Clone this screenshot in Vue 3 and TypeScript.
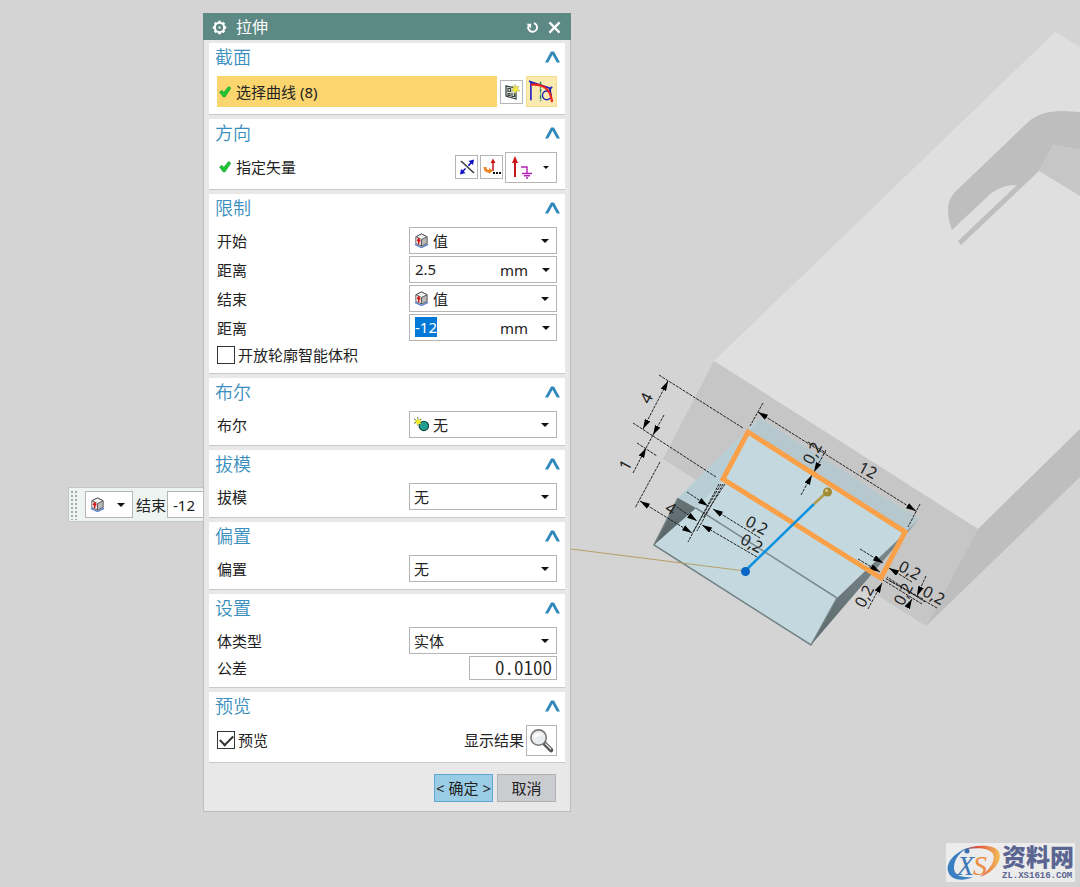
<script setup lang="ts">
import { onMounted, ref } from 'vue'

interface Line {
  d: string
  kind?: 'end' | 'both'
}
interface Label {
  x: number
  y: number
  r: number
  t: string
}

const start = ref('值')
const end = ref('值')
const startDistance = ref('2.5')
const endDistance = ref('-12')
const openProfile = ref(false)
const preview = ref(true)
const tolerance = ref('0.0100')
const endField = ref<HTMLInputElement | null>(null)

const simple = [
  { id: 'boolean', title: '布尔', icon: true },
  { id: 'draft', title: '拔模', icon: false },
  { id: 'offset', title: '偏置', icon: false },
]

const lines: Line[] = [
  { d: 'M659 375L743 428' },
  { d: 'M633 423L716 477' },
  { d: 'M668 381L643 429', kind: 'both' },
  { d: 'M664 415L653 435', kind: 'end' },
  { d: 'M653 435L646 448' },
  { d: 'M633 473L646 448', kind: 'end' },
  { d: 'M637 443L657 456' },
  { d: 'M660 462L635 508' },
  { d: 'M640 501L692 533', kind: 'both' },
  { d: 'M719 484L688 542' },
  { d: 'M721 484L693 532' },
  { d: 'M723 484L697 531' },
  { d: 'M725 484L703 518' },
  { d: 'M687 492L708 506', kind: 'end' },
  { d: 'M760 538L713 509', kind: 'end' },
  { d: 'M677 507L697 521', kind: 'end' },
  { d: 'M757 557L702 525', kind: 'end' },
  { d: 'M763 403L750 426' },
  { d: 'M758 412L916 511', kind: 'both' },
  { d: 'M920 504L908 527' },
  { d: 'M826 450L814 472', kind: 'end' },
  { d: 'M801 495L812 475', kind: 'end' },
  { d: 'M808 442L826 453' },
  { d: 'M860 549L883 563', kind: 'end' },
  { d: 'M858 559L880 572', kind: 'end' },
  { d: 'M912 582L889 568', kind: 'end' },
  { d: 'M937 608L885 578' },
  { d: 'M922 604L883 580' },
  { d: 'M925 602L887 577' },
  { d: 'M923 599L888 580' },
  { d: 'M868 609L882 583', kind: 'end' },
  { d: 'M926 576L917 596', kind: 'end' },
  { d: 'M907 608L912 599', kind: 'end' },
]

const labels: Label[] = [
  { x: 646, y: 398, r: -62, t: '4' },
  { x: 625, y: 465, r: -62, t: '1' },
  { x: 671, y: 508, r: 32, t: '4' },
  { x: 757, y: 525, r: 28, t: '0,2' },
  { x: 752, y: 543, r: 28, t: '0,2' },
  { x: 812, y: 453, r: -62, t: '0,2' },
  { x: 868, y: 470, r: 28, t: '12' },
  { x: 910, y: 570, r: 28, t: '0,2' },
  { x: 934, y: 595, r: 28, t: '0,2' },
  { x: 864, y: 596, r: -62, t: '0,2' },
  { x: 903, y: 594, r: -62, t: '0,2' },
]

onMounted(() => {
  endField.value?.focus()
  endField.value?.select()
})
</script>

<template>
  <main class="desktop">
    <svg class="scene" viewBox="0 0 1080 887" preserveAspectRatio="xMinYMin slice" aria-hidden="true">
      <defs>
        <marker id="arrow" viewBox="0 0 10 6" refX="10" refY="3" markerWidth="10" markerHeight="6" markerUnits="userSpaceOnUse" orient="auto-start-reverse">
          <path d="M0 0L10 3L0 6Z" fill="#000" />
        </marker>
        <linearGradient id="left-side" x1="0" y1="0" x2="0" y2="1">
          <stop offset="0" stop-color="#667477" />
          <stop offset="1" stop-color="#58656a" />
        </linearGradient>
        <linearGradient id="right-side" x1="1" y1="0" x2="0" y2="1">
          <stop offset="0" stop-color="#839296" />
          <stop offset="1" stop-color="#5d696c" />
        </linearGradient>
      </defs>
      <path d="M1055 32L1080 47V429L978 529L714 361Z" fill="#dfdfdf" />
      <path d="M714 361L978 529L926 626L663 459Z" fill="#c6c6c6" />
      <path d="M978 529L1080 429V477L926 626Z" fill="#bebebe" />
      <path d="M948 211C948 203 950 197 956 191L1026 124C1036 114 1048 111 1062 111L1080 112V150L1053 145L1039 171L961 245L958 241L1017 185C1004 185 995 189 986 198L952 230C950 224 948 218 948 211Z" fill="#bebebe" />
      <path d="M1053 145L1080 150V196L1039 171Z" fill="#c6c6c6" />

      <path d="M760 418L919 519L837 598L811 645L654 545L678 498Z" fill="#c4d9df" />
      <path d="M760 418L919 519L906 533L748 432Z" fill="#b6c8cd" />
      <path d="M760 418L748 432L723 480L696 508L678 498Z" fill="#b8ced6" />
      <path d="M678 498L696 508L654 545Z" fill="url(#left-side)" />
      <path d="M919 519L811 645L837 598L905 533Z" fill="url(#right-side)" />
      <path d="M696 508L837 598" stroke="#7b898c" stroke-width="1.5" />
      <path d="M678 498L654 545L811 645L837 598" fill="none" stroke="#718084" stroke-width="1.5" />

      <path d="M571 549L745 571" stroke="#b69f66" />
      <path v-for="line in lines" :key="line.d" class="dim" :d="line.d"
        :marker-end="line.kind ? 'url(#arrow)' : undefined"
        :marker-start="line.kind === 'both' ? 'url(#arrow)' : undefined" />
      <path d="M748 432L905 532L881 578L723 479Z" fill="none" stroke="#f9a048" stroke-width="5" />
      <path d="M745 571L814 504" stroke="#0c91e0" stroke-width="2.5" />
      <path d="M814 504L827 492" stroke="#b09a4c" stroke-width="2.5" />
      <circle cx="827.5" cy="492" r="4.5" fill="#a18a35" />
      <circle cx="826.5" cy="490.500" r="1.500" fill="#ddcb85" />
      <circle cx="745.5" cy="571.500" r="4.500" fill="#0a66c6" />
      <text v-for="(l, i) in labels" :key="i" class="dim-text" :transform="`translate(${l.x} ${l.y}) rotate(${l.r})`" y="6">{{ l.t }}</text>

      <symbol id="cube" viewBox="0 0 16 16">
        <path d="M1 12L8 15.500L15 12" fill="none" stroke="#5c86d4" stroke-width="1.500" />
        <path d="M2 4L8 1L14 4V11L8 14L2 11Z" fill="#b9b9b9" stroke="#555" />
        <path d="M2 4L8 1L14 4L8 7Z" fill="#f1f1f1" stroke="#555" />
        <path d="M2.500 4.800L7.500 7V13L2.500 10.800Z" fill="#f0dcdc" />
        <path d="M8 7V14" stroke="#555" />
        <path d="M5 12V7M3.500 8.500L5 6L6.500 9" fill="none" stroke="#d01414" stroke-width="1.400" />
      </symbol>
      <symbol id="check" viewBox="0 0 12 12">
        <path d="M0.500 6L3 4.300L4.800 6.300L9.500 0.500L12 2L6 11H4.200Z" fill="#1fc335" stroke="#109a28" stroke-width="0.500" />
      </symbol>
      <symbol id="chevron" viewBox="0 0 15 12">
        <path d="M0 11.500L6 0.500H9L15 11.500H11.800L7.500 3.800L3.200 11.500Z" fill="#3089b9" />
      </symbol>
    </svg>

    <form class="floating" @submit.prevent>
      <span class="grip"></span>
      <span class="pick mini">
        <svg class="pick-icon"><use href="#cube" /></svg>
        <select aria-label="结束类型"><option></option></select>
      </span>
      <label for="quick-end">结束</label>
      <input id="quick-end" v-model="endDistance" type="text" />
    </form>

    <section class="dialog" role="dialog" aria-labelledby="dialog-title">
      <header class="titlebar">
        <svg class="gear" viewBox="0 0 16 16">
          <circle cx="8" cy="8" r="5" fill="none" stroke="#fff" stroke-width="2.200" />
          <path d="M8 0.800V3M8 13V15.200M0.800 8H3M13 8H15.200M2.900 2.900L4.500 4.500M11.500 11.500L13.100 13.100M2.900 13.100L4.500 11.500M11.500 4.500L13.100 2.900" stroke="#fff" stroke-width="2.800" />
          <circle cx="8" cy="8" r="1.200" fill="#fff" />
        </svg>
        <h1 id="dialog-title">拉伸</h1>
        <button type="button" class="tool" aria-label="重置">
          <svg viewBox="0 0 14 14"><path d="M8.500 2.200A4.800 4.800 0 1 1 2.600 5.200" fill="none" stroke="#fff" stroke-width="2" /><path d="M0.500 3H5.500V8Z" fill="#fff" /></svg>
        </button>
        <button type="button" class="tool" aria-label="关闭">
          <svg viewBox="0 0 14 14"><path d="M1.500 1.500L12.500 12.500M12.500 1.500L1.500 12.500" stroke="#fff" stroke-width="2.400" /></svg>
        </button>
      </header>

      <form class="body" @submit.prevent>
        <section class="group">
          <h2>截面 <button type="button" aria-label="收起截面"><svg><use href="#chevron" /></svg></button></h2>
          <div class="row picker">
            <span class="selected"><svg class="check"><use href="#check" /></svg>选择曲线 (8)</span>
            <button type="button" class="icon-btn" aria-label="绘制截面">
              <svg viewBox="0 0 18 18">
                <path d="M3 3L13 5V16L3 13Z" fill="#e9eee6" stroke="#3b4540" stroke-width="1.300" />
                <path d="M5 5.500H7.500V8.500H5ZM5 10.500H7V12.500H5ZM9 9.500V13.500H11.500V10" fill="none" stroke="#3b4540" stroke-width="1.200" />
                <path d="M12 1L13 4L16 3L14.500 6L17 8L13.500 8L12.500 11L11 8L8 7.500L10.500 5.500L9.500 2.500L12 4Z" fill="#f3ea3c" stroke="#a4a86b" stroke-width="0.500" />
              </svg>
            </button>
            <button type="button" class="icon-btn large active" aria-label="曲线">
              <svg viewBox="0 0 28 28">
                <path d="M3 23V4L24 11M1 3L6 6M25 9L21 14" fill="none" stroke="#2222b8" stroke-width="1.700" />
                <circle cx="19.500" cy="18" r="4.500" fill="none" stroke="#2222b8" stroke-width="1.500" />
                <path d="M23 11L24 22" stroke="#2222b8" stroke-width="1.500" />
                <path d="M13 4V25" stroke="#168060" stroke-width="1.400" stroke-dasharray="4 1 1 1" />
                <path d="M3 7C14 6 23 9 25 25" fill="none" stroke="#ee2518" stroke-width="2.200" />
              </svg>
            </button>
          </div>
        </section>

        <section class="group">
          <h2>方向 <button type="button" aria-label="收起方向"><svg><use href="#chevron" /></svg></button></h2>
          <div class="row tall">
            <span class="plain"><svg class="check"><use href="#check" /></svg>指定矢量</span>
            <button type="button" class="icon-btn" aria-label="反向">
              <svg viewBox="0 0 18 18">
                <path d="M3 3L16 15" stroke="#3c3c3c" stroke-width="1.600" />
                <path d="M4 14L14 4" stroke="#1010c0" stroke-width="1.500" stroke-dasharray="5 4" />
                <path d="M10.500 3L16 1.500L15 7ZM2 16.500L3 11L7.500 15Z" fill="#1010c0" />
              </svg>
            </button>
            <button type="button" class="icon-btn" aria-label="矢量对话框">
              <svg viewBox="0 0 18 18">
                <path d="M10 13V3" stroke="#c71616" stroke-width="1.500" />
                <path d="M10 0.500L12.500 5H7.500Z" fill="#c71616" />
                <path d="M2 9C2 13 4 13.500 7 13.500" fill="none" stroke="#ef8422" stroke-width="2.800" />
                <path d="M6 10L10 12.500L6 16Z" fill="#ef8422" />
                <path d="M10 15H12M13 15H15M16 15H18" stroke="#111" stroke-width="1.800" />
              </svg>
            </button>
            <span class="vector">
              <svg viewBox="0 0 30 28">
                <path d="M9 24V7" stroke="#c61a1a" stroke-width="2" />
                <path d="M9 3L12 10H6Z" fill="#d01414" />
                <path d="M15 14H21V20M16 20.500H26M18 22.800H24M20 25H22" fill="none" stroke="#b31fb3" stroke-width="1.400" />
              </svg>
              <select aria-label="指定矢量"><option></option></select>
            </span>
          </div>
        </section>

        <section class="group">
          <h2>限制 <button type="button" aria-label="收起限制"><svg><use href="#chevron" /></svg></button></h2>
          <div class="stack">
            <div class="row">
              <label for="start">开始</label>
              <span class="pick with-icon"><svg class="pick-icon"><use href="#cube" /></svg><select id="start" v-model="start"><option>值</option></select></span>
            </div>
            <div class="row">
              <label for="start-distance">距离</label>
              <span class="pick measure"><input id="start-distance" v-model="startDistance" type="text" /><select aria-label="开始距离单位"><option>mm</option></select></span>
            </div>
            <div class="row">
              <label for="end">结束</label>
              <span class="pick with-icon"><svg class="pick-icon"><use href="#cube" /></svg><select id="end" v-model="end"><option>值</option></select></span>
            </div>
            <div class="row">
              <label for="end-distance">距离</label>
              <span class="pick measure"><input id="end-distance" ref="endField" v-model="endDistance" type="text" /><select aria-label="结束距离单位"><option>mm</option></select></span>
            </div>
            <label class="tick"><input v-model="openProfile" type="checkbox" />开放轮廓智能体积</label>
          </div>
        </section>

        <section v-for="g in simple" :key="g.id" class="group">
          <h2>{{ g.title }} <button type="button" :aria-label="'收起' + g.title"><svg><use href="#chevron" /></svg></button></h2>
          <div class="row">
            <label :for="g.id">{{ g.title }}</label>
            <span class="pick" :class="{ 'with-icon': g.icon }">
              <svg v-if="g.icon" class="pick-icon" viewBox="0 0 16 16">
                <circle cx="10.500" cy="9.500" r="5" fill="#1fa090" stroke="#134840" stroke-width="1.200" />
                <path d="M4 0V9M0 2L9 8M0 7L8 2" stroke="#49704a" stroke-width="1" />
                <path d="M4 1L5 3.500L8 3L6.500 5.500L8 8L5 7L3 8.500L2.500 6L0.500 4L3 3.500Z" fill="#f4ef26" />
              </svg>
              <select :id="g.id"><option>无</option></select>
            </span>
          </div>
        </section>

        <section class="group">
          <h2>设置 <button type="button" aria-label="收起设置"><svg><use href="#chevron" /></svg></button></h2>
          <div class="stack">
            <div class="row">
              <label for="body-type">体类型</label>
              <span class="pick"><select id="body-type"><option>实体</option></select></span>
            </div>
            <div class="row">
              <label for="tolerance">公差</label>
              <input id="tolerance" v-model="tolerance" class="tolerance" type="text" />
            </div>
          </div>
        </section>

        <section class="group">
          <h2>预览 <button type="button" aria-label="收起预览"><svg><use href="#chevron" /></svg></button></h2>
          <div class="row tall">
            <label class="tick"><input v-model="preview" type="checkbox" />预览</label>
            <label class="result" for="show-result">显示结果</label>
            <button id="show-result" type="button" class="icon-btn large" aria-label="显示结果">
              <svg viewBox="0 0 28 28">
                <path d="M17 17L24 24" stroke="#555" stroke-width="4.500" stroke-linecap="round" />
                <path d="M18 17L24 23" stroke="#ddd" stroke-width="1.500" />
                <circle cx="11" cy="11" r="8" fill="#e9edf0" stroke="#777" stroke-width="1.600" />
                <path d="M6 10C7 6 12 5 15 8C12 8 8 10 6 14Z" fill="#fff" />
              </svg>
            </button>
          </div>
        </section>
      </form>

      <footer>
        <button type="button" class="ok">&lt; 确定 &gt;</button>
        <button type="button" class="cancel">取消</button>
      </footer>
    </section>

    <aside class="watermark">
      <svg viewBox="0 0 56 38" aria-hidden="true">
        <defs>
          <linearGradient id="swoosh" x1="0" y1="0" x2="1" y2="0">
            <stop offset="0" stop-color="#2f72bb" />
            <stop offset="0.45" stop-color="#e2563b" />
            <stop offset="1" stop-color="#f2bd5a" />
          </linearGradient>
        </defs>
        <path d="M20 5C8 9 0 19 2 27C4 36 16 38 27 33C15 34 8 31 8 24C8 16 13 9 20 5Z" fill="#3b7fc3" />
        <path d="M14 7C28 0 49 0 53 8C57 18 46 29 34 33C43 26 50 17 47 10C43 3 27 3 14 7Z" fill="url(#swoosh)" />
        <circle cx="21" cy="7" r="2.500" fill="#3b6eaf" />
        <text x="11" y="31" class="logo-x">X</text>
        <text x="27" y="31" class="logo-s">S</text>
      </svg>
      <div class="brand"><strong>资料网</strong><span>ZL.XS1616.COM</span></div>
    </aside>
  </main>
</template>

<style>
body {
  background: #d4d4d4;
}
</style>

<style scoped>
.desktop {
  position: relative;
  min-height: 100vh;
  overflow: hidden;
  background: #d4d4d4;
  color: #222;
  font: 15px/20px "Noto Sans", "Noto Sans CJK SC", sans-serif;
}
.desktop * {
  box-sizing: border-box;
}
.scene {
  position: absolute;
  inset: 0;
  width: 100%;
  height: 100%;
}
.dim {
  fill: none;
  stroke: #222;
  stroke-width: 1;
  stroke-dasharray: 3 1;
}
.dim-text {
  font-size: 16px;
  fill: #222;
  text-anchor: middle;
}
input,
select,
button {
  margin: 0;
  padding: 0;
  border: 0;
  border-radius: 0;
  outline: 0;
  background: transparent;
  color: inherit;
  font: inherit;
}
input::selection {
  background: #0078d7;
  color: #fff;
}
select {
  appearance: none;
}
.dialog {
  position: absolute;
  left: 203px;
  top: 13px;
  width: 368px;
  border: 1px solid #bdbdbd;
  background: #e8e8e8;
}
.titlebar {
  display: flex;
  align-items: center;
  height: 27px;
  margin: -1px -1px 0;
  padding: 1px 8px 0 9px;
  background: #5c8984;
  color: #fff;
}
.gear {
  width: 15px;
  height: 15px;
}
h1 {
  flex: 1;
  margin: 0 0 0 9px;
  font-size: 16px;
  font-weight: 400;
}
.tool {
  display: grid;
  place-items: center;
  width: 17px;
  height: 20px;
  margin-left: 5px;
}
.tool svg {
  width: 13px;
  height: 13px;
}
.body {
  display: grid;
  gap: 4px;
  padding: 3px 5px 0;
}
.group {
  padding: 0 8px 7px;
  border-bottom: 1px solid #c9c9c9;
  background: #fff;
}
h2 {
  display: flex;
  justify-content: space-between;
  align-items: center;
  height: 33px;
  margin: 0 -8px 0 -2px;
  padding: 0 0 5px;
  color: #3a8fbe;
  font-size: 18px;
  font-weight: 350;
}
h2 button {
  display: grid;
  place-items: center;
  width: 26px;
  height: 20px;
}
h2 svg {
  width: 15px;
  height: 12px;
}
.row {
  display: flex;
  align-items: center;
  justify-content: space-between;
}
.stack {
  display: grid;
  gap: 2px;
}
.picker {
  gap: 3px;
}
.selected,
.plain {
  display: flex;
  flex: 1;
  align-items: center;
  gap: 5px;
  padding-left: 2px;
}
.selected {
  height: 31px;
  background: #fbd66f;
}
.check {
  width: 12px;
  height: 12px;
}
.tall {
  gap: 2px;
  height: 30px;
}
.icon-btn {
  display: grid;
  place-items: center;
  width: 23px;
  height: 24px;
  border: 1px solid #b5b5b5;
  background: #fff;
}
.icon-btn svg {
  width: 18px;
  height: 18px;
}
.large {
  width: 31px;
  height: 31px;
}
.large svg {
  width: 27px;
  height: 27px;
}
.active {
  border-color: #f5dc8e;
  background: #faeab0;
}
.vector {
  position: relative;
  display: flex;
  align-items: center;
  width: 52px;
  height: 31px;
  border: 1px solid #b5b5b5;
}
.vector svg {
  width: 30px;
  height: 28px;
}
.vector select {
  position: absolute;
  inset: 0;
  width: 100%;
}
.pick {
  position: relative;
  display: flex;
  align-items: center;
  width: 148px;
  height: 27px;
  border: 1px solid #b5b5b5;
  background: #fff;
}
.pick::after,
.vector::after {
  content: "";
  position: absolute;
  right: 7px;
  top: 11px;
  border: 4px solid transparent;
  border-top: 4px solid #111;
  border-bottom: 0;
  pointer-events: none;
}
.measure::after {
  right: 6px;
}
.vector::after {
  top: 13px;
  border-width: 3px 3px 0;
}
.pick select {
  width: 100%;
  height: 25px;
  padding: 0 24px 0 4px;
}
.pick.with-icon select {
  padding-left: 23px;
}
.pick-icon {
  position: absolute;
  left: 4px;
  top: 5px;
  width: 15px;
  height: 15px;
  pointer-events: none;
}
.pick.measure input {
  width: 90px;
  height: 25px;
  padding: 0 0 2px 5px;
}
.pick.measure select {
  width: 56px;
  padding: 0;
}
.tick {
  display: flex;
  align-items: center;
  gap: 3px;
}
.stack .tick {
  margin: 2px 0 1px;
}
.tick input {
  appearance: none;
  width: 18px;
  height: 18px;
  border: 1px solid #333;
}
.tick input:checked::after {
  content: "";
  display: block;
  width: 11px;
  height: 6px;
  margin: 3px 0 0 2px;
  border: solid #333;
  border-width: 0 0 2px 2px;
  transform: rotate(-45deg);
}
.result {
  margin-left: auto;
}
.tolerance {
  width: 88px;
  height: 24px;
  padding: 0 4px 3px 0;
  border: 1px solid #b5b5b5;
  background: #fff;
  font-family: "Noto Sans CJK SC", sans-serif;
  font-size: 19px;
  font-weight: 350;
  font-feature-settings: "hwid";
  text-align: right;
}
footer {
  display: flex;
  justify-content: flex-end;
  gap: 4px;
  padding: 11px 14px 9px;
}
footer button {
  width: 59px;
  height: 28px;
  border: 1px solid #b0b1b5;
  background: #cbccd0;
  white-space: nowrap;
}
footer .ok {
  border-color: #5ea9d3;
  background: #9acce6;
}
.floating {
  position: absolute;
  left: 68px;
  top: 487px;
  display: flex;
  align-items: center;
  width: 170px;
  height: 35px;
  border: 1px solid #c3c8c7;
  background: #eef4f2;
}
.grip {
  width: 8px;
  height: 30px;
  margin: 0 7px 0 1px;
  background: radial-gradient(circle, #aaa 1px, transparent 1px) 0 0 / 4px 4px;
}
.mini {
  width: 48px;
  margin-right: 3px;
}
.floating label {
  margin-right: 1px;
}
.floating > input {
  width: 60px;
  height: 27px;
  padding-left: 5px;
  border: 1px solid #b5b5b5;
  background: #fff;
}
.watermark {
  position: absolute;
  right: 5px;
  bottom: 5px;
  display: flex;
  align-items: center;
  width: 129px;
  height: 39px;
  background: #ececec;
  color: #5a6592;
}
.watermark svg {
  width: 56px;
  height: 38px;
}
.brand {
  display: grid;
}
.brand strong {
  font: 900 24px/27px "Liberation Sans", "Noto Sans CJK SC", sans-serif;
}
.brand span {
  font: bold 9px/10px "Liberation Mono", monospace;
}
.logo-x,
.logo-s {
  font: italic 28px "Liberation Serif", serif;
  fill: #3b76b6;
}
.logo-s {
  fill: #ed8b42;
}
</style>
